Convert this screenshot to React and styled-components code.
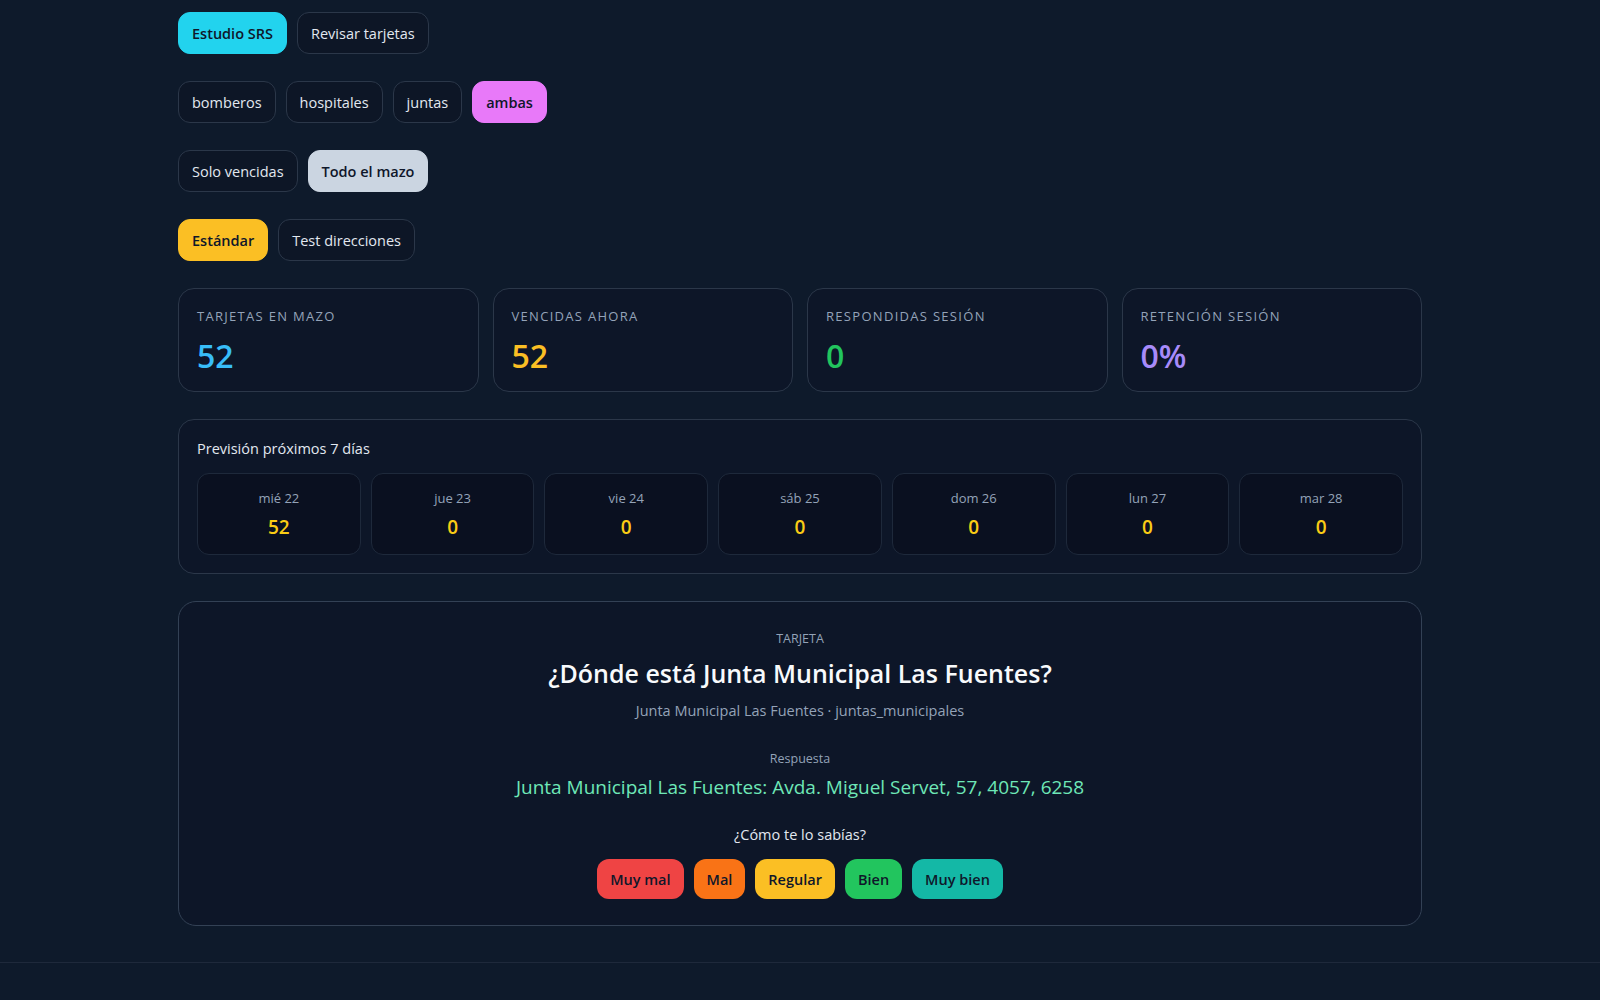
import React, { useState } from "react";
import styled, { createGlobalStyle } from "styled-components";

const GlobalStyle = createGlobalStyle`
  body {
    margin: 0;
    background: #0e1a2b;
    color: #e2e8f0;
    font-family: "Open Sans", "Noto Sans", sans-serif;
  }
  * { box-sizing: border-box; }
`;

const stats = [
  { label: "Tarjetas en mazo", value: "52", color: "#38bdf8" },
  { label: "Vencidas ahora", value: "52", color: "#fbbf24" },
  { label: "Respondidas sesión", value: "0", color: "#22c55e" },
  { label: "Retención sesión", value: "0%", color: "#a78bfa" },
];

const forecast = [
  { day: "mié 22", count: 52 },
  { day: "jue 23", count: 0 },
  { day: "vie 24", count: 0 },
  { day: "sáb 25", count: 0 },
  { day: "dom 26", count: 0 },
  { day: "lun 27", count: 0 },
  { day: "mar 28", count: 0 },
];

const grades = [
  { label: "Muy mal", color: "#ef4444" },
  { label: "Mal", color: "#f97316" },
  { label: "Regular", color: "#fbbf24" },
  { label: "Bien", color: "#22c55e" },
  { label: "Muy bien", color: "#14b8a6" },
];

const App = () => {
  const [mode, setMode] = useState("study");
  const [layer, setLayer] = useState("ambas");
  const [scope, setScope] = useState("all");
  const [type, setType] = useState("std");

  return (
    <>
      <GlobalStyle />
      <Main>
        <ButtonRow>
          <Chip $active={mode === "study"} $bg="#22d3ee" onClick={() => setMode("study")}>
            Estudio SRS
          </Chip>
          <Chip $active={mode === "review"} $bg="#22d3ee" onClick={() => setMode("review")}>
            Revisar tarjetas
          </Chip>
        </ButtonRow>

        <ButtonRow>
          {["bomberos", "hospitales", "juntas", "ambas"].map((l) => (
            <Chip key={l} $active={layer === l} $bg="#e879f9" onClick={() => setLayer(l)}>
              {l}
            </Chip>
          ))}
        </ButtonRow>

        <ButtonRow>
          <Chip $active={scope === "due"} $bg="#cbd5e1" onClick={() => setScope("due")}>
            Solo vencidas
          </Chip>
          <Chip $active={scope === "all"} $bg="#cbd5e1" onClick={() => setScope("all")}>
            Todo el mazo
          </Chip>
        </ButtonRow>

        <ButtonRow>
          <Chip $active={type === "std"} $bg="#fbbf24" onClick={() => setType("std")}>
            Estándar
          </Chip>
          <Chip $active={type === "addr"} $bg="#fbbf24" onClick={() => setType("addr")}>
            Test direcciones
          </Chip>
        </ButtonRow>

        <StatsGrid>
          {stats.map((s) => (
            <StatCard key={s.label}>
              <StatLabel>{s.label}</StatLabel>
              <StatValue $color={s.color}>{s.value}</StatValue>
            </StatCard>
          ))}
        </StatsGrid>

        <Panel>
          <PanelTitle>Previsión próximos 7 días</PanelTitle>
          <DaysGrid>
            {forecast.map((d) => (
              <DayBox key={d.day}>
                <DayLabel>{d.day}</DayLabel>
                <DayValue>{d.count}</DayValue>
              </DayBox>
            ))}
          </DaysGrid>
        </Panel>

        <FlashCard>
          <Eyebrow>Tarjeta</Eyebrow>
          <Question>¿Dónde está Junta Municipal Las Fuentes?</Question>
          <Meta>Junta Municipal Las Fuentes · juntas_municipales</Meta>
          <AnswerLabel>Respuesta</AnswerLabel>
          <Answer>Junta Municipal Las Fuentes: Avda. Miguel Servet, 57, 4057, 6258</Answer>
          <Prompt>¿Cómo te lo sabías?</Prompt>
          <GradeRow>
            {grades.map((g) => (
              <GradeButton key={g.label} $bg={g.color}>
                {g.label}
              </GradeButton>
            ))}
          </GradeRow>
        </FlashCard>
      </Main>
      <Footer />
    </>
  );
};

const Main = styled.main`
  max-width: 1244px;
  margin: 0 auto;
  padding: 12px 0 36px;
  display: flex;
  flex-direction: column;
  gap: 27px;
`;

const ButtonRow = styled.div`
  display: flex;
  gap: 10px;
`;

const Chip = styled.button`
  height: 42px;
  padding: 0 13px;
  border-radius: 12px;
  font-family: inherit;
  font-size: 14.5px;
  cursor: pointer;
  border: 1px solid ${(p) => (p.$active ? p.$bg : "#2b3749")};
  background: ${(p) => (p.$active ? p.$bg : "#0d1626")};
  color: ${(p) => (p.$active ? "#0f172a" : "#e2e8f0")};
  font-weight: ${(p) => (p.$active ? 600 : 400)};
`;

const StatsGrid = styled.div`
  display: grid;
  grid-template-columns: repeat(4, 1fr);
  gap: 14px;
`;

const StatCard = styled.div`
  border: 1px solid #2b3749;
  border-radius: 16px;
  background: #0d1628;
  padding: 19px 18px 17px;
`;

const StatLabel = styled.div`
  font-size: 13px;
  line-height: 17px;
  letter-spacing: 0.1em;
  text-transform: uppercase;
  color: #94a3b8;
`;

const StatValue = styled.div`
  margin-top: 12px;
  font-size: 32px;
  line-height: 37px;
  font-weight: 600;
  color: ${(p) => p.$color};
`;

const Panel = styled.section`
  border: 1px solid #2b3749;
  border-radius: 16px;
  background: #0d1628;
  padding: 18px;
`;

const PanelTitle = styled.div`
  font-size: 14.5px;
  line-height: 22px;
  color: #e2e8f0;
  margin-bottom: 13px;
`;

const DaysGrid = styled.div`
  display: grid;
  grid-template-columns: repeat(7, 1fr);
  gap: 10px;
`;

const DayBox = styled.div`
  border: 1px solid #1e293b;
  border-radius: 12px;
  background: #0a1020;
  padding: 15px 8px 13px;
  text-align: center;
`;

const DayLabel = styled.div`
  font-size: 13px;
  line-height: 18px;
  color: #94a3b8;
`;

const DayValue = styled.div`
  margin-top: 6px;
  font-size: 19px;
  line-height: 28px;
  font-weight: 600;
  color: #facc15;
`;

const FlashCard = styled.section`
  border: 1px solid #334155;
  border-radius: 18px;
  background: #0d1628;
  padding: 28px 24px 26px;
  display: flex;
  flex-direction: column;
  align-items: center;
  text-align: center;
`;

const Eyebrow = styled.div`
  font-size: 12.5px;
  line-height: 18px;
  text-transform: uppercase;
  color: #94a3b8;
`;

const Question = styled.h2`
  margin: 8px 0 0;
  font-size: 25px;
  line-height: 34px;
  font-weight: 600;
  color: #f8fafc;
`;

const Meta = styled.div`
  margin-top: 10px;
  font-size: 14.5px;
  line-height: 22px;
  color: #94a3b8;
`;

const AnswerLabel = styled.div`
  margin-top: 28px;
  font-size: 12.5px;
  line-height: 18px;
  color: #94a3b8;
`;

const Answer = styled.div`
  margin-top: 6px;
  font-size: 19px;
  line-height: 26px;
  color: #6ee7b7;
`;

const Prompt = styled.div`
  margin-top: 24px;
  font-size: 14.5px;
  line-height: 22px;
  color: #e2e8f0;
`;

const GradeRow = styled.div`
  margin-top: 13px;
  display: flex;
  gap: 10px;
`;

const GradeButton = styled.button`
  height: 40px;
  padding: 0 13px;
  border: none;
  border-radius: 12px;
  font-family: inherit;
  font-size: 14.5px;
  font-weight: 600;
  color: #0f172a;
  background: ${(p) => p.$bg};
  cursor: pointer;
`;

const Footer = styled.footer`
  height: 60px;
  border-top: 1px solid #1e293b;
  background: #0e1a2b;
`;

export default App;
